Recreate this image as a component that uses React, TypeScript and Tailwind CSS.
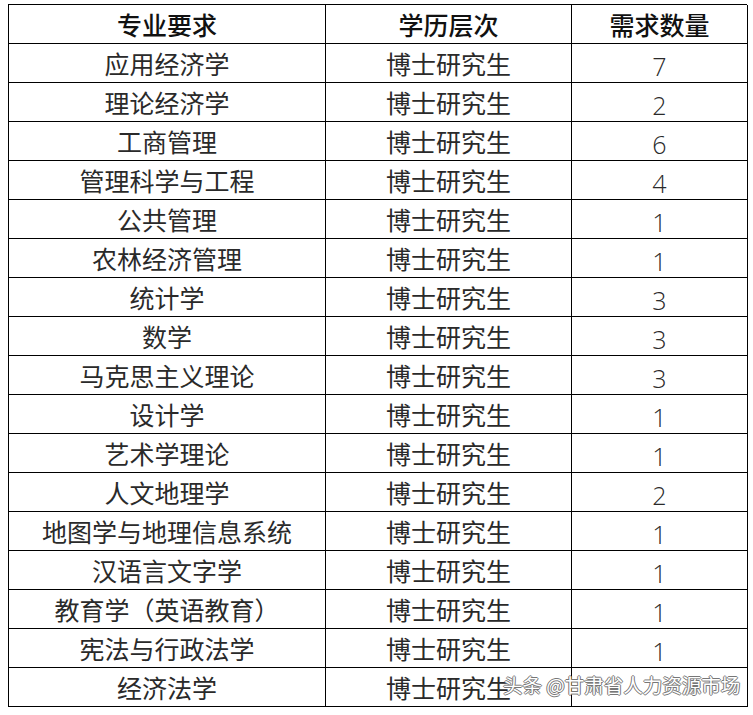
const ROWS: [string, string, string][] = [
  ['应用经济学', '博士研究生', '7'],
  ['理论经济学', '博士研究生', '2'],
  ['工商管理', '博士研究生', '6'],
  ['管理科学与工程', '博士研究生', '4'],
  ['公共管理', '博士研究生', '1'],
  ['农林经济管理', '博士研究生', '1'],
  ['统计学', '博士研究生', '3'],
  ['数学', '博士研究生', '3'],
  ['马克思主义理论', '博士研究生', '3'],
  ['设计学', '博士研究生', '1'],
  ['艺术学理论', '博士研究生', '1'],
  ['人文地理学', '博士研究生', '2'],
  ['地图学与地理信息系统', '博士研究生', '1'],
  ['汉语言文字学', '博士研究生', '1'],
  ['教育学（英语教育）', '博士研究生', '1'],
  ['宪法与行政法学', '博士研究生', '1'],
  ['经济法学', '博士研究生', ''],
];

const cell =
  'flex h-[39px] items-center justify-center border-r border-b border-black pt-[3px] leading-none';

export default function App() {
  return (
    <div className="relative h-[715px] w-[753px] bg-white font-['Open_Sans','Noto_Sans_CJK_SC',sans-serif] text-[25px] text-[#2a2a2a]">
      <div className="absolute left-[8px] top-[4px] grid w-[739px] grid-cols-[317px_246px_176px] border-l border-t border-black">
        <div className={`${cell} font-medium text-[#111]`}>专业要求</div>
        <div className={`${cell} font-medium text-[#111]`}>学历层次</div>
        <div className={`${cell} font-medium text-[#111]`}>需求数量</div>
        {ROWS.map(([major, degree, count]) => (
          <div key={major} className="contents">
            <div className={cell}>{major}</div>
            <div className={cell}>{degree}</div>
            <div className={`${cell} pt-[7px] font-light`}>{count}</div>
          </div>
        ))}
      </div>

      {/* watermark */}
      <div className="absolute left-[503px] top-[675px] whitespace-nowrap font-['Noto_Sans_CJK_SC',sans-serif] text-[19.5px] leading-none text-white [text-shadow:1px_0_0_#777,-1px_0_0_#777,0_1px_0_#777,0_-1px_0_#777]">
        头条 @甘肃省人力资源市场
      </div>
    </div>
  );
}
